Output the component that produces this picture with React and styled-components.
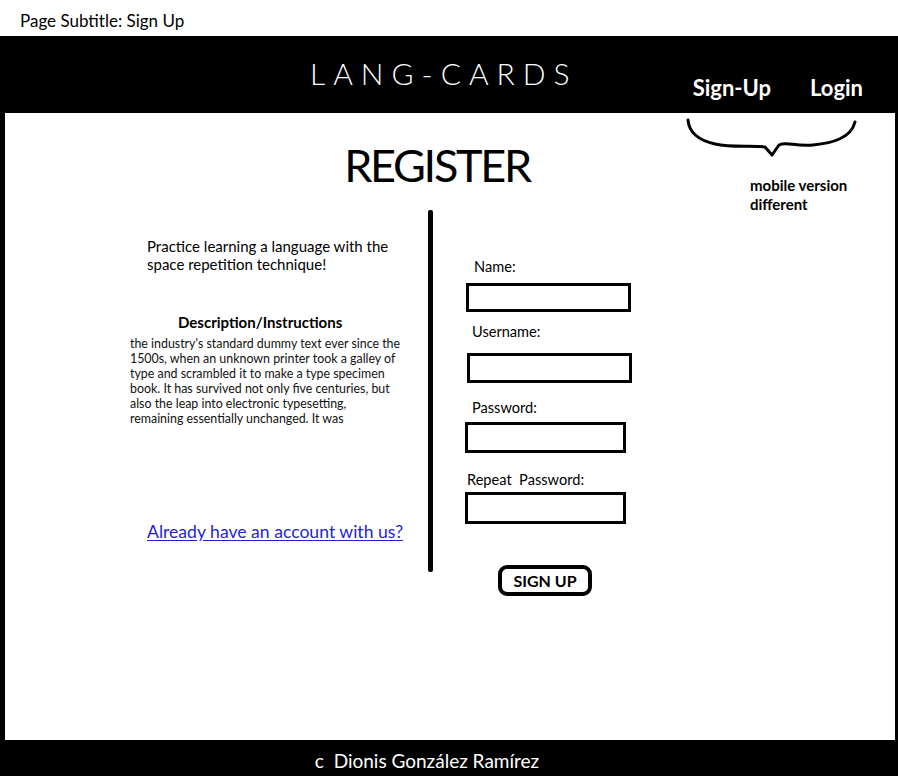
import React from 'react';
import styled, { createGlobalStyle } from 'styled-components';

const GlobalStyle = createGlobalStyle`
  html, body {
    margin: 0;
    padding: 0;
    background: #fff;
    font-family: Lato, "Open Sans", sans-serif;
    color: #000;
  }
`;

const Page = styled.div`
  width: 898px;
  height: 776px;
  display: flex;
  flex-direction: column;
`;

const Subtitle = styled.div`
  height: 36px;
  padding-left: 20px;
  font-size: 17px;
  line-height: 42px;
  box-sizing: border-box;
`;

const Frame = styled.div`
  flex: 1;
  display: flex;
  flex-direction: column;
  background: #000;
  padding: 0 3px 0 5px;
`;

const Header = styled.header`
  height: 77px;
  display: flex;
  align-items: flex-start;
  color: #fff;
`;

const Brand = styled.div`
  margin-left: 305px;
  padding-top: 22px;
  font-size: 30px;
  font-weight: 300;
  line-height: 30px;
  letter-spacing: 8px;
`;

const Nav = styled.nav`
  margin-left: auto;
  padding: 41px 32px 0 0;
  display: flex;
  gap: 39px;
`;

const NavLink = styled.span`
  font-size: 22px;
  font-weight: 700;
  line-height: 22px;
`;

const Main = styled.main`
  position: relative;
  height: 627px;
  background: #fff;
`;

const Note = styled.div`
  position: absolute;
  left: 678px;
  top: 3px;
  width: 190px;
`;

const NoteText = styled.div`
  margin: 12px 0 0 67px;
  font-size: 15px;
  font-weight: 700;
  line-height: 19px;
`;

const Title = styled.h1`
  margin: 0;
  padding: 30px 26px 0 0;
  text-align: center;
  font-size: 45px;
  font-weight: 400;
  line-height: 45px;
  letter-spacing: -2.3px;
`;

const Columns = styled.div`
  margin-top: 22px;
  display: flex;
  align-items: flex-start;
`;

const Intro = styled.section`
  width: 423px;
  display: flex;
  flex-direction: column;
  align-items: flex-start;
`;

const Tagline = styled.p`
  margin: 27px 0 0 142px;
  font-size: 15px;
  line-height: 18px;
  white-space: nowrap;
`;

const SectionHeading = styled.h2`
  margin: 41px 0 0 173px;
  font-size: 15px;
  font-weight: 700;
  line-height: 17px;
`;

const Body = styled.p`
  margin: 5px 0 0 125px;
  font-size: 12.4px;
  line-height: 15px;
  color: #111;
  white-space: nowrap;
`;

const AccountLink = styled.a`
  margin: 95px 0 0 142px;
  font-size: 17.6px;
  line-height: 22px;
  color: #1f1fd8;
  text-decoration: underline;
  text-underline-offset: 2px;
  cursor: pointer;
`;

const Divider = styled.div`
  width: 5px;
  height: 362px;
  border-radius: 2px;
  background: #000;
`;

const Form = styled.form`
  flex: 1;
  display: flex;
  flex-direction: column;
  align-items: flex-start;
`;

const Label = styled.label`
  margin: ${p => p.$top}px 0 0 ${p => p.$indent}px;
  font-size: 14.6px;
  line-height: 17px;
  white-space: pre;
`;

const Input = styled.input`
  margin: ${p => p.$top}px 0 0 ${p => p.$indent}px;
  width: ${p => p.$w}px;
  height: ${p => p.$h}px;
  box-sizing: border-box;
  border: 3px solid #000;
  border-radius: 0;
  padding: 0 6px;
  background: #fff;
  outline: none;
`;

const SubmitButton = styled.button`
  margin: 41px 0 0 65px;
  width: 94px;
  height: 31px;
  box-sizing: border-box;
  border: 4px solid #000;
  border-radius: 9px;
  background: #fff;
  font-family: Lato, "Open Sans", sans-serif;
  font-size: 16px;
  font-weight: 700;
  padding: 0;
  color: #000;
`;

const Footer = styled.footer`
  height: 36px;
  box-sizing: border-box;
  padding: 5px 46px 0 0;
  display: flex;
  align-items: center;
  justify-content: center;
  color: #fff;
  font-size: 19px;
  white-space: pre;
`;

const fields = [
  { label: 'Name:', labelTop: 48, labelIndent: 41, top: 8, indent: 33, w: 165, h: 29, type: 'text' },
  { label: 'Username:', labelTop: 11, labelIndent: 39, top: 13, indent: 34, w: 165, h: 30, type: 'text' },
  { label: 'Password:', labelTop: 16, labelIndent: 39, top: 6, indent: 32, w: 161, h: 31, type: 'password' },
  { label: 'Repeat  Password:', labelTop: 18, labelIndent: 34, top: 4, indent: 32, w: 161, h: 32, type: 'password' },
];

function Brace() {
  return (
    <svg width="180" height="45" viewBox="0 0 180 45">
      <path
        d="M5 4 C 6 16, 14 24, 32 28 C 50 32, 70 29, 82 31 L 89 39 L 96 29 C 104 25, 112 31, 130 29 C 150 27, 168 22, 172 6"
        fill="none"
        stroke="#000"
        strokeWidth="3"
        strokeLinecap="round"
        strokeLinejoin="round"
      />
    </svg>
  );
}

export default function App() {
  return (
    <Page>
      <GlobalStyle />
      <Subtitle>Page Subtitle: Sign Up</Subtitle>
      <Frame>
        <Header>
          <Brand>LANG-CARDS</Brand>
          <Nav>
            <NavLink>Sign-Up</NavLink>
            <NavLink>Login</NavLink>
          </Nav>
        </Header>
        <Main>
          <Note>
            <Brace />
            <NoteText>
              mobile version
              <br />
              different
            </NoteText>
          </Note>
          <Title>REGISTER</Title>
          <Columns>
            <Intro>
              <Tagline>
                Practice learning a language with the
                <br />
                space repetition technique!
              </Tagline>
              <SectionHeading>Description/Instructions</SectionHeading>
              <Body>
                the industry's standard dummy text ever since the
                <br />
                1500s, when an unknown printer took a galley of
                <br />
                type and scrambled it to make a type specimen
                <br />
                book. It has survived not only five centuries, but
                <br />
                also the leap into electronic typesetting,
                <br />
                remaining essentially unchanged. It was
              </Body>
              <AccountLink>Already have an account with us?</AccountLink>
            </Intro>
            <Divider />
            <Form onSubmit={e => e.preventDefault()}>
              {fields.map(f => (
                <React.Fragment key={f.label}>
                  <Label $top={f.labelTop} $indent={f.labelIndent}>{f.label}</Label>
                  <Input type={f.type} $top={f.top} $indent={f.indent} $w={f.w} $h={f.h} />
                </React.Fragment>
              ))}
              <SubmitButton type="submit">SIGN UP</SubmitButton>
            </Form>
          </Columns>
        </Main>
        <Footer>{'c  Dionis González Ramírez'}</Footer>
      </Frame>
    </Page>
  );
}
